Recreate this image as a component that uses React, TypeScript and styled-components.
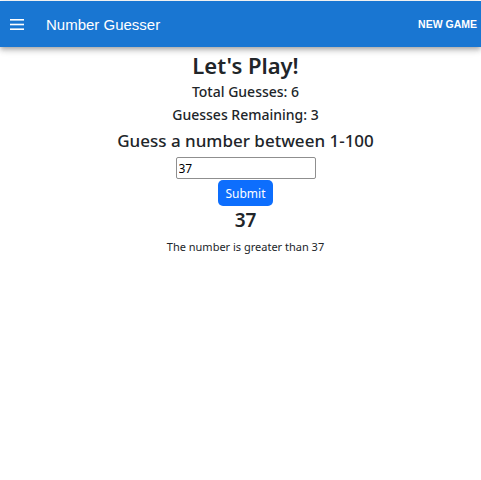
import React from "react";
import styled, { createGlobalStyle } from "styled-components";

const Global = createGlobalStyle`
  html, body { margin: 0; padding: 0; background: #fff; }
  body { font-family: "Noto Sans", "Segoe UI", sans-serif; color: #212529; }
  * { box-sizing: border-box; }
`;

const AppBar = styled.header`
  margin-top: 1px;
  height: 46px;
  background: #1976d2;
  color: #fff;
  display: flex;
  align-items: center;
  padding: 0 4px 0 10px;
  box-shadow: 0 2px 4px -1px rgba(0,0,0,0.2), 0 4px 5px 0 rgba(0,0,0,0.14), 0 1px 10px 0 rgba(0,0,0,0.12);
  font-family: "Liberation Sans", Arial, sans-serif;
`;

const MenuButton = styled.button`
  background: none;
  border: none;
  padding: 0;
  width: 14px;
  height: 14px;
  display: flex;
  align-items: center;
  justify-content: center;
  color: #fff;
  margin-right: 22px;
`;

const Title = styled.div`
  font-size: 15px;
  flex: 1;
`;

const NavButton = styled.button`
  background: none;
  border: none;
  color: #fff;
  font-family: "Liberation Sans", Arial, sans-serif;
  font-size: 10.5px;
  font-weight: 700;
  text-transform: uppercase;
  padding: 0;
`;

const Main = styled.main`
  padding-left: 10px;
  display: flex;
  flex-direction: column;
  align-items: center;
  text-align: center;
`;

const Heading = styled.h1`
  margin: 5px 0 0;
  font-size: 22px;
  font-weight: 600;
  line-height: 1.2;
`;

const Stat = styled.h2`
  margin: 6px 0 0;
  font-size: 14px;
  font-weight: 500;
  line-height: 1.2;
`;

const Prompt = styled.h3`
  margin: 7px 0 0;
  font-size: 17px;
  font-weight: 500;
  line-height: 1.2;
`;

const Input = styled.input`
  margin-top: 6px;
  width: 140px;
  height: 22px;
  border: 1px solid #8f8f8f;
  border-radius: 2px;
  padding: 1px 2px;
  font-family: "Noto Sans", sans-serif;
  font-size: 12px;
  color: #000;
  outline: none;
`;

const SubmitButton = styled.button`
  margin-top: 1px;
  background: #0d6efd;
  color: #fff;
  border: none;
  border-radius: 5px;
  font-family: "Noto Sans", sans-serif;
  font-size: 12px;
  padding: 0 7px;
  height: 26px;
`;

const Result = styled.div`
  margin-top: 1px;
  font-size: 19px;
  font-weight: 600;
`;

const Hint = styled.p`
  margin: 6px 0 0;
  font-size: 11px;
`;

export default function App() {
  return (
    <>
      <Global />
      <AppBar>
        <MenuButton aria-label="menu">
          <svg width="14" height="11" viewBox="0 0 14 11">
            <rect x="0" y="0" width="14" height="1.6" fill="#fff" />
            <rect x="0" y="4.7" width="14" height="1.6" fill="#fff" />
            <rect x="0" y="9.4" width="14" height="1.6" fill="#fff" />
          </svg>
        </MenuButton>
        <Title>Number Guesser</Title>
        <NavButton>New Game</NavButton>
      </AppBar>
      <Main>
        <Heading>Let's Play!</Heading>
        <Stat>Total Guesses: 6</Stat>
        <Stat>Guesses Remaining: 3</Stat>
        <Prompt>Guess a number between 1-100</Prompt>
        <Input defaultValue="37" />
        <SubmitButton>Submit</SubmitButton>
        <Result>37</Result>
        <Hint>The number is greater than 37</Hint>
      </Main>
    </>
  );
}
